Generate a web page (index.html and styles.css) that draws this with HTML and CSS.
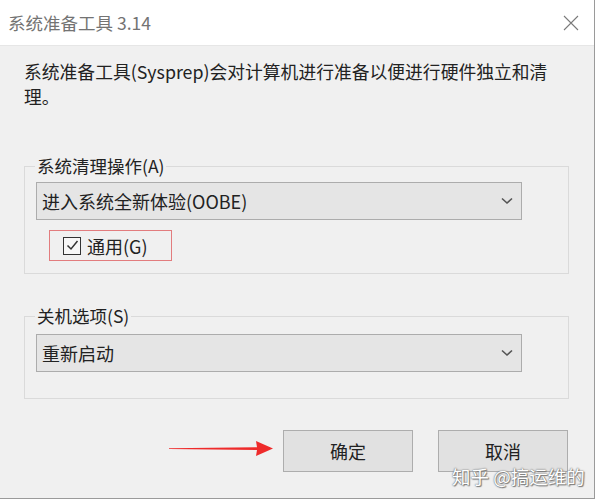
FILE: index.html
```html
<!DOCTYPE html>
<html lang="zh-CN">
<head>
<meta charset="utf-8">
<title>系统准备工具 3.14</title>
<link rel="stylesheet" href="styles.css">
</head>
<body>
<div class="window">
  <div class="titlebar">
    <span class="title">系统准备工具 3.14</span>
    <svg class="close" width="16" height="16" viewBox="0 0 16 16"><path d="M1 1L15 15M15 1L1 15" stroke="#7a7a7a" stroke-width="1.1" fill="none"/></svg>
  </div>
  <div class="content">
    <p class="desc">系统准备工具(Sysprep)会对计算机进行准备以便进行硬件独立和清<br>理。</p>
    <fieldset class="group group-first">
      <legend>系统清理操作(A)</legend>
      <div class="select select-first">
        <span>进入系统全新体验(OOBE)</span>
        <svg width="12" height="8" viewBox="0 0 12 8"><path d="M1 1.5L6 6L11 1.5" stroke="#555" stroke-width="1.6" fill="none"/></svg>
      </div>
      <div class="check-wrap">
        <span class="checkbox"><svg width="15" height="15" viewBox="0 0 15 15"><path d="M2.5 7.5L6 11L12.5 3" stroke="#333" stroke-width="1.5" fill="none"/></svg></span>
        <span class="check-label">通用(G)</span>
      </div>
    </fieldset>
    <fieldset class="group group-second">
      <legend>关机选项(S)</legend>
      <div class="select select-second">
        <span>重新启动</span>
        <svg width="12" height="8" viewBox="0 0 12 8"><path d="M1 1.5L6 6L11 1.5" stroke="#555" stroke-width="1.6" fill="none"/></svg>
      </div>
    </fieldset>
    <div class="buttons">
      <button class="btn">确定</button>
      <button class="btn">取消</button>
    </div>
  </div>
  <svg class="arrow" width="106" height="18" viewBox="0 0 106 18"><path d="M0 8.3L88 7.2L87 1L104 8.5L87 16L88 10L0 8.9Z" fill="#ee2b2b"/></svg>
  <div class="watermark">知乎 @搞运维的</div>
</div>
</body>
</html>
```
FILE: styles.css
```css
* { box-sizing: border-box; }
html, body { margin: 0; padding: 0; background: #ffffff; }
body {
  width: 597px;
  height: 500px;
  overflow: hidden;
  font-family: "Noto Sans CJK SC", "Noto Sans", sans-serif;
  color: #222;
}
.window {
  position: relative;
  width: 595px;
  height: 499px;
  background: #f0f0f0;
  border-right: 1px solid #9a9a9a;
  border-bottom: 1px solid #9a9a9a;
  display: flex;
  flex-direction: column;
}
.titlebar {
  height: 46px;
  background: #ffffff;
  border-bottom: 1px solid #e6e6e6;
  display: flex;
  align-items: center;
  justify-content: space-between;
  padding: 0 15px 0 8px;
  flex-shrink: 0;
}
.title {
  font-size: 17.5px;
  color: #737373;
  line-height: 22px;
}
.close { margin-top: 1px; }
.content {
  flex: 1;
  padding: 13px 26px 0 24px;
}
.desc {
  margin: 0;
  font-size: 17.8px;
  line-height: 25px;
  color: #222;
  white-space: nowrap;
}
.group {
  margin: 0;
  width: 545px;
  border: 1px solid #dadada;
  padding: 0 0 0 11px;
  min-width: 0;
}
.group legend {
  padding: 0 2px;
  margin-left: -1px;
  font-size: 17.5px;
  line-height: 20px;
  color: #222;
}
.group-first { margin-top: 47px; padding-bottom: 12px; }
.group-second { margin-top: 32px; padding-bottom: 26px; }
.select {
  width: 486px;
  height: 38px;
  background: #e5e5e5;
  border: 1px solid #acacac;
  display: flex;
  align-items: center;
  justify-content: space-between;
  padding: 0 8px 0 5px;
  font-size: 18px;
  color: #222;
}
.select-first { margin-top: 6px; }
.select-second { margin-top: 8px; }
.check-wrap {
  margin: 10px 0 0 13px;
  width: 123px;
  height: 31px;
  border: 1px solid #e27c7e;
  display: flex;
  align-items: center;
  padding-left: 13px;
  gap: 6px;
}
.checkbox {
  width: 18px;
  height: 18px;
  border: 1.5px solid #333;
  background: #f7f7f7;
  display: flex;
  align-items: center;
  justify-content: center;
}
.check-label {
  font-size: 18px;
  color: #222;
  line-height: 20px;
}
.buttons {
  margin-top: 31px;
  display: flex;
  justify-content: flex-end;
  gap: 25px;
}
.btn {
  width: 130px;
  height: 42px;
  background: #e1e1e1;
  border: 1.5px solid #adadad;
  font-family: "Noto Sans CJK SC", "Noto Sans", sans-serif;
  font-size: 18px;
  color: #222;
  padding: 0;
}
.arrow {
  position: absolute;
  left: 169px;
  top: 440px;
}
.watermark {
  position: absolute;
  left: 452px;
  top: 466px;
  font-size: 18.5px;
  line-height: 20px;
  color: #ffffff;
  text-shadow: 0 0 1px #666, 0 0 2px #888, 1px 1px 1px #777;
  white-space: nowrap;
}
```
